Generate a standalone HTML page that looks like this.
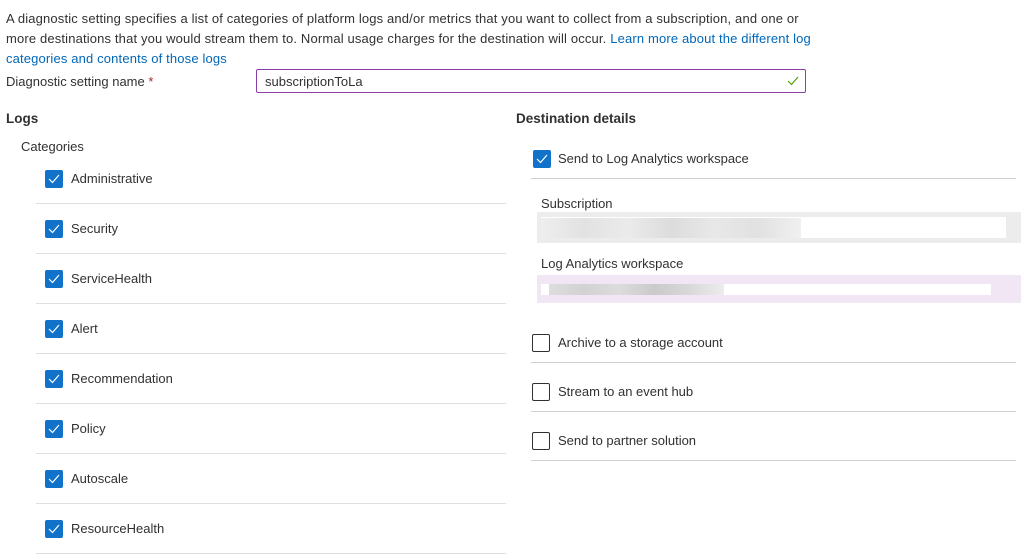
<!DOCTYPE html>
<html><head><style>
*{margin:0;padding:0;box-sizing:border-box}
body{width:1024px;height:560px;background:#fff;font-family:"Liberation Sans",sans-serif;font-size:13px;color:#323130;position:relative;overflow:hidden}
.a{position:absolute}
.intro{left:6px;top:9px;width:900px;line-height:20px;white-space:nowrap;letter-spacing:0.15px}
a{color:#0067b8;text-decoration:none}
.cb{position:absolute;width:18px;height:18px;border-radius:2px;background:#1172c9}
.cb svg{position:absolute;left:3px;top:4px}
.ub{position:absolute;width:18px;height:18px;border:1px solid #323130;border-radius:2px;background:#fff}
.line{position:absolute;height:1px;background:#e1dfdd}
.lbl{position:absolute;white-space:nowrap}
</style></head><body>
<div class="a intro">A diagnostic setting specifies a list of categories of platform logs and/or metrics that you want to collect from a subscription, and one or<br>more destinations that you would stream them to. Normal usage charges for the destination will occur. <a>Learn more about the different log<br>categories and contents of those logs</a></div>
<div class="lbl" style="left:6px;top:74px">Diagnostic setting name <span style="color:#a4262c">*</span></div>
<div class="a" style="left:256px;top:69px;width:550px;height:24px;border:1px solid #8a3eaa;border-radius:2px"><span class="a" style="left:8px;top:4px">subscriptionToLa</span>
<svg class="a" style="right:6px;top:6px" width="12" height="10" viewBox="0 0 12 10"><path d="M1 5l3.5 3.5L11 1" fill="none" stroke="#57a300" stroke-width="1.2"/></svg></div>
<div class="lbl" style="left:6px;top:111px;font-weight:bold;font-size:13.5px">Logs</div>
<div class="lbl" style="left:21px;top:139px">Categories</div>

<div id="rows"></div>
<div class="lbl" style="left:516px;top:111px;font-weight:bold;font-size:13.5px">Destination details</div>
<div class="cb" style="left:533px;top:150px"><svg width="12" height="10" viewBox="0 0 12 10"><path d="M1 5l3.5 3.5L11 1" fill="none" stroke="#fff" stroke-width="1.2"/></svg></div>
<div class="lbl" style="left:558px;top:151px">Send to Log Analytics workspace</div>
<div class="line" style="left:531px;top:178px;width:485px;background:#d2d0ce"></div>
<div class="lbl" style="left:541px;top:196px">Subscription</div>
<div class="a" style="left:537px;top:212px;width:484px;height:31px;background:#ececec"></div>
<div class="a" style="left:541px;top:217px;width:465px;height:21px;background:#fff"></div>
<div class="a" style="left:541px;top:218px;width:260px;height:20px;background:linear-gradient(90deg,#eee,#e2e2e2,#ebebeb,#dcdcdc,#e8e8e8,#e1e1e1,#f0f0f0)"></div>
<div class="lbl" style="left:541px;top:256px">Log Analytics workspace</div>
<div class="a" style="left:537px;top:275px;width:484px;height:28px;background:#f1e6f4"></div>
<div class="a" style="left:541px;top:284px;width:450px;height:11px;background:#fff"></div>
<div class="a" style="left:549px;top:284px;width:175px;height:11px;background:linear-gradient(90deg,#ddd,#d2d2d2,#dcdcdc,#cacaca,#d8d8d8,#ececec)"></div>
<div class="ub" style="left:532px;top:334px"></div>
<div class="lbl" style="left:558px;top:335px">Archive to a storage account</div>
<div class="line" style="left:531px;top:362px;width:485px;background:#d2d0ce"></div>
<div class="ub" style="left:532px;top:383px"></div>
<div class="lbl" style="left:558px;top:384px">Stream to an event hub</div>
<div class="line" style="left:531px;top:411px;width:485px;background:#d2d0ce"></div>
<div class="ub" style="left:532px;top:432px"></div>
<div class="lbl" style="left:558px;top:433px">Send to partner solution</div>
<div class="line" style="left:531px;top:460px;width:485px;background:#d2d0ce"></div>
<script>
var n=["Administrative","Security","ServiceHealth","Alert","Recommendation","Policy","Autoscale","ResourceHealth"],h="";
n.forEach(function(t,i){var y=170+i*50;
h+='<div class="cb" style="left:45px;top:'+y+'px"><svg width="12" height="10" viewBox="0 0 12 10"><path d="M1 5l3.5 3.5L11 1" fill="none" stroke="#fff" stroke-width="1.2"/></svg></div><div class="lbl" style="left:71px;top:'+(y+1)+'px">'+t+'</div><div class="line" style="left:36px;top:'+(y+33)+'px;width:470px"></div>';});
document.getElementById("rows").innerHTML=h;
</script>
</body></html>
